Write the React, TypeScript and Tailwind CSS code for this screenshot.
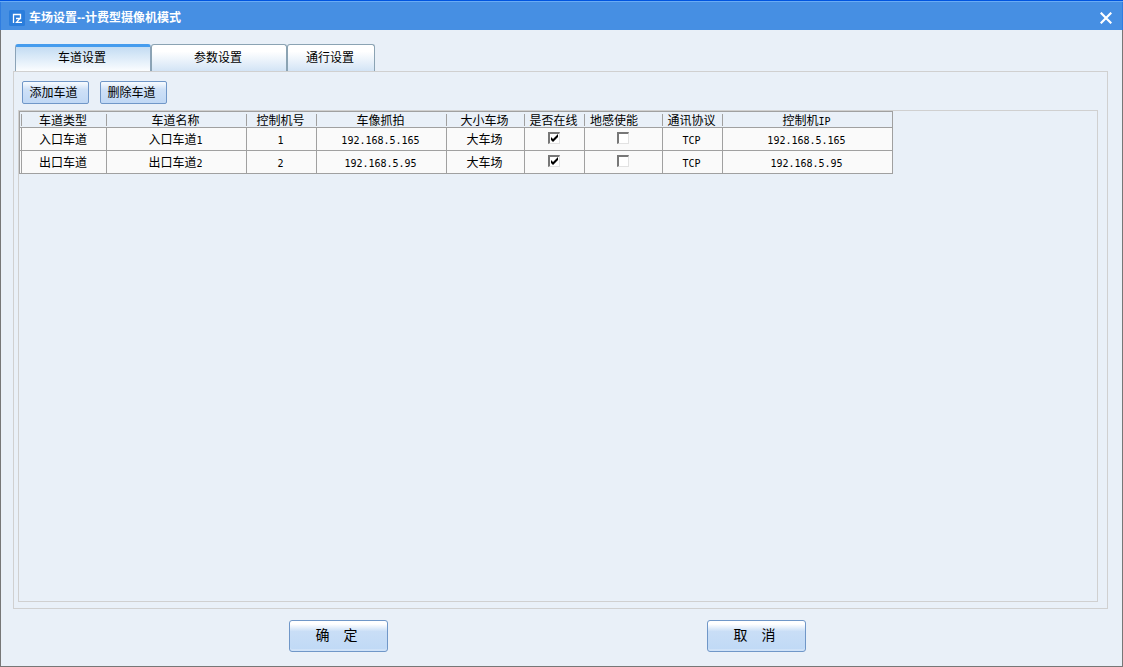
import { useState } from "react";

type Lane = {
  kind: string;
  name: string;
  controller: string;
  cameraIp: string;
  lot: string;
  online: boolean;
  loop: boolean;
  protocol: string;
  controllerIp: string;
};

const lanes: Lane[] = [
  {
    kind: "入口车道",
    name: "入口车道1",
    controller: "1",
    cameraIp: "192.168.5.165",
    lot: "大车场",
    online: true,
    loop: false,
    protocol: "TCP",
    controllerIp: "192.168.5.165",
  },
  {
    kind: "出口车道",
    name: "出口车道2",
    controller: "2",
    cameraIp: "192.168.5.95",
    lot: "大车场",
    online: true,
    loop: false,
    protocol: "TCP",
    controllerIp: "192.168.5.95",
  },
];

const columns = [
  { title: "车道类型", width: "w-[85px]" },
  { title: "车道名称", width: "w-[140px]" },
  { title: "控制机号", width: "w-[70px]" },
  { title: "车像抓拍", width: "w-[130px]" },
  { title: "大小车场", width: "w-[78px]" },
  { title: "是否在线", width: "w-[60px]" },
  { title: "地感使能", width: "w-[78px]", left: true },
  { title: "通讯协议", width: "w-[60px]" },
  { title: "控制机IP", width: "w-[170px]" },
];

const tabs = [
  { title: "车道设置", width: "w-[136px]" },
  { title: "参数设置", width: "w-[136px]" },
  { title: "通行设置", width: "w-[88px]" },
];

/* Latin letters and digits are set in a half-width mono face beside the Chinese text. */
function Mixed({ text }: { text: string }) {
  return (
    <>
      {text.split(/([A-Za-z0-9.]+)/).map((part, i) =>
        /^[A-Za-z0-9.]+$/.test(part) ? (
          <span key={i} className="font-['DejaVu_Sans_Mono',monospace] text-[10px] leading-none">
            {part}
          </span>
        ) : (
          part
        ),
      )}
    </>
  );
}

function TitleBar() {
  return (
    <header className="flex h-[30px] shrink-0 items-center border-t border-[#0055e0] bg-[#468fe3] pr-[9px] pl-[9px] shadow-[inset_0_1px_0_#69abf5,inset_1px_0_0_#2f7de0,inset_-1px_0_0_#2f7de0]">
      <svg className="mt-1 size-4" viewBox="0 0 16 16" aria-hidden="true">
        <rect width="16" height="16" rx="1.5" fill="#2a7ddc" />
        <path d="M4.5 13V4.5H11.5V8.5H7" fill="none" stroke="#fff" strokeWidth="1.3" />
        <path d="M10.8 8.5L7.5 12.3H13" fill="none" stroke="#fff" strokeWidth="1.3" />
      </svg>
      <h1 className="mt-1 ml-1 flex-1 text-[12px] leading-4 font-bold text-white">车场设置--计费型摄像机模式</h1>
      <button type="button" aria-label="关闭" className="mt-1 flex size-4 items-center justify-center">
        <svg className="size-3" viewBox="0 0 12 12" aria-hidden="true">
          <path d="M0.7 0.7L11.3 11.3M11.3 0.7L0.7 11.3" stroke="#fff" strokeWidth="2.2" />
        </svg>
      </button>
    </header>
  );
}

function ToolButton({ children }: { children: string }) {
  return (
    <button
      type="button"
      className="h-[23px] w-[67px] rounded-[2px] border border-[#7097c8] bg-linear-to-b from-[#f4f9fe] from-5% via-[#cfe1f7] via-35% to-[#c0d8f5] pr-1 text-[12px] leading-5"
    >
      {children}
    </button>
  );
}

function DialogButton({ children }: { children: string }) {
  return (
    <button
      type="button"
      className="h-8 w-[99px] rounded-[3px] border border-[#7097c8] bg-linear-to-b from-white from-10% via-[#c9def6] via-35% to-[#bfd9f6] pr-1 pb-[2px] text-[14px] leading-5 whitespace-pre shadow-[inset_0_-2px_0_#cfe2f8]"
    >
      {children}
    </button>
  );
}

function GridCheckbox({ label, initial }: { label: string; initial: boolean }) {
  const [checked, setChecked] = useState(initial);
  return (
    <span className="relative mb-1 inline-block size-3 align-middle">
      <input
        type="checkbox"
        aria-label={label}
        checked={checked}
        onChange={(e) => setChecked(e.target.checked)}
        className="block size-3 appearance-none border-t-2 border-r border-b border-l-2 border-t-[#777] border-r-[#e2e2e2] border-b-[#e2e2e2] border-l-[#777] bg-white"
      />
      {checked && (
        <svg className="pointer-events-none absolute top-0 left-0 size-3" viewBox="0 0 12 12" aria-hidden="true">
          <path d="M3 5L5 7L10 2V5L5 10L3 8Z" fill="#000" />
        </svg>
      )}
    </span>
  );
}

function LaneTable() {
  const cell = "h-[23px] border-r border-b border-[#a0a0a0] bg-[#fafafa] p-0 pt-px pr-[2px]";
  return (
    <table className="w-[874px] table-fixed border-separate border-spacing-0 border-t border-l border-[#a0a0a0] text-center text-[12px] leading-4">
      <thead>
        <tr>
          <td className="h-4 w-[2px] border-b border-[#a0a0a0] p-0">
            <div className="h-3 border-r border-[#a0a0a0]" />
          </td>
          {columns.map((c, i) => (
            <th
              key={c.title}
              scope="col"
              className={`h-4 border-b border-[#a0a0a0] p-0 font-normal ${c.width} ${
                i === columns.length - 1 ? "border-r" : ""
              }`}
            >
              <div
                className={`flex h-3 items-center border-[#a0a0a0] pt-[2px] ${
                  c.left ? "justify-start pl-[5px]" : "justify-center pr-[2px]"
                } ${i === columns.length - 1 ? "" : "border-r"}`}
              >
                <span>
                  <Mixed text={c.title} />
                </span>
              </div>
            </th>
          ))}
        </tr>
      </thead>
      <tbody>
        {lanes.map((lane) => (
          <tr key={lane.name}>
            <td className="border-r border-b border-[#a0a0a0] bg-[#fafafa] p-0" />
            <td className={cell}>{lane.kind}</td>
            <td className={cell}>
              <Mixed text={lane.name} />
            </td>
            <td className={cell}>
              <Mixed text={lane.controller} />
            </td>
            <td className={cell}>
              <Mixed text={lane.cameraIp} />
            </td>
            <td className={cell}>{lane.lot}</td>
            <td className={cell}>
              <GridCheckbox label="是否在线" initial={lane.online} />
            </td>
            <td className={cell}>
              <GridCheckbox label="地感使能" initial={lane.loop} />
            </td>
            <td className={cell}>
              <Mixed text={lane.protocol} />
            </td>
            <td className={cell}>
              <Mixed text={lane.controllerIp} />
            </td>
          </tr>
        ))}
      </tbody>
    </table>
  );
}

export default function App() {
  const [active, setActive] = useState(0);
  return (
    <div className="flex min-h-screen flex-col bg-[#e9f0f8] font-['Liberation_Sans','Noto_Sans_CJK_SC',sans-serif] text-black">
      <TitleBar />
      <main className="flex flex-1 flex-col border-x border-b border-[#777] pt-[14px] pr-[14px] pl-3">
        <div role="tablist" className="flex pl-[2px]">
          {tabs.map((tab, i) => (
            <button
              key={tab.title}
              type="button"
              role="tab"
              aria-selected={i === active}
              onClick={() => setActive(i)}
              className={`h-[27px] rounded-t-[3px] border-x pr-[2px] text-[12px] leading-4 ${tab.width} ${
                i === active
                  ? "border-t-[3px] border-x-[#8ba3b8] border-t-[#459cee] bg-linear-to-b from-[#c3dcf3] to-[#fbfdff] pb-[2px]"
                  : "border-t border-[#8ba3b3] bg-linear-to-b from-white from-25% to-[#d3e4f5]"
              }`}
            >
              {tab.title}
            </button>
          ))}
        </div>
        <section className="flex flex-1 flex-col border border-[#d0d0d0] pt-[9px] pr-[9px] pb-[6px] pl-1">
          <div className="flex gap-[11px] pl-1">
            <ToolButton>添加车道</ToolButton>
            <ToolButton>删除车道</ToolButton>
          </div>
          <div className="mt-[6px] flex-1 overflow-auto border border-[#d0d0d0]">
            <LaneTable />
          </div>
        </section>
        <footer className="flex justify-center gap-[319px] pt-[11px] pr-[26px] pb-[14px]">
          <DialogButton>{"确　定"}</DialogButton>
          <DialogButton>{"取　消"}</DialogButton>
        </footer>
      </main>
    </div>
  );
}
